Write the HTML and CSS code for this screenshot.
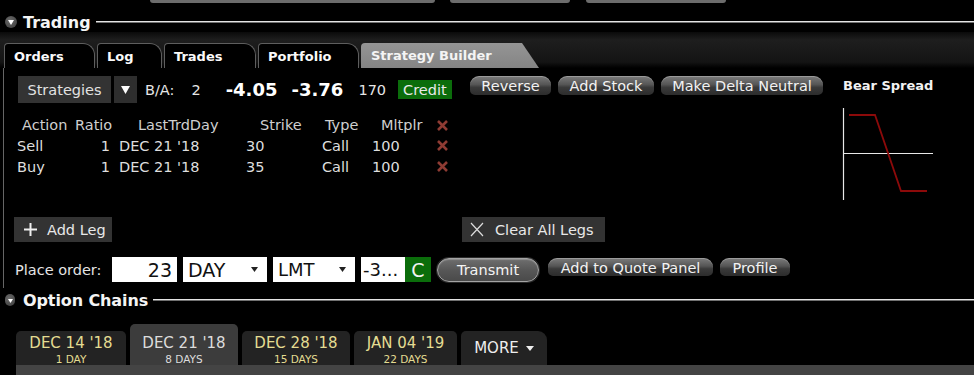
FILE: index.html
```html
<!DOCTYPE html>
<html lang="en">
<head>
<meta charset="utf-8">
<title>Trading</title>
<link rel="stylesheet" href="styles.css">
</head>
<body>
<div class="topstrip"><span class="tb tb1"></span><span class="tb tb2"></span><span class="tb tb3"></span></div>

<div class="section-head trading-head">
  <span class="disc"><svg width="6" height="5" viewBox="0 0 6 5"><path d="M0 0H6L3 5Z" fill="#fff"/></svg></span>
  <span class="sh-title">Trading</span>
  <span class="sh-line"></span>
</div>

<div class="trading">
  <div class="tabs">
    <div class="tab t-orders">Orders</div>
    <div class="tab t-log">Log</div>
    <div class="tab t-trades">Trades</div>
    <div class="tab t-portfolio">Portfolio</div>
    <div class="tab t-sb active">Strategy Builder</div>
  </div>
  <div class="pbody">
    <div class="upper">
      <div class="left">
        <div class="strat-row">
          <span class="strat-btn">Strategies</span>
          <span class="strat-dd"><svg width="9" height="8" viewBox="0 0 9 8"><path d="M0 0H9L4.5 8Z" fill="#fff"/></svg></span>
          <span class="ba">B/A:</span>
          <span class="ba-n">2</span>
          <span class="px px-bid">-4.05</span>
          <span class="px px-ask">-3.76</span>
          <span class="vol">170</span>
          <span class="credit">Credit</span>
        </div>
        <div class="legs">
          <div class="lrow lhead">
            <span>Action</span><span>Ratio</span><span>LastTrdDay</span><span>Strike</span><span>Type</span><span>Mltplr</span>
            <span class="xc"><svg width="11" height="11" viewBox="0 0 11 11"><path d="M1 1L10 10M10 1L1 10" stroke="#8e3b33" stroke-width="2.6"/></svg></span>
          </div>
          <div class="lrow">
            <span>Sell</span><span>1</span><span>DEC 21 '18</span><span>30</span><span>Call</span><span>100</span>
            <span class="xc"><svg width="11" height="11" viewBox="0 0 11 11"><path d="M1 1L10 10M10 1L1 10" stroke="#8e3b33" stroke-width="2.6"/></svg></span>
          </div>
          <div class="lrow">
            <span>Buy</span><span>1</span><span>DEC 21 '18</span><span>35</span><span>Call</span><span>100</span>
            <span class="xc"><svg width="11" height="11" viewBox="0 0 11 11"><path d="M1 1L10 10M10 1L1 10" stroke="#8e3b33" stroke-width="2.6"/></svg></span>
          </div>
        </div>
      </div>
      <div class="actions">
        <span class="gbtn b-rev">Reverse</span>
        <span class="gbtn b-stock">Add Stock</span>
        <span class="gbtn b-delta">Make Delta Neutral</span>
      </div>
      <div class="diagram">
        <div class="dg-title">Bear Spread</div>
        <svg class="dg-chart" width="92" height="92" viewBox="0 0 92 92">
          <path d="M1.5 0V92" stroke="#e8e8e8" stroke-width="1.2"/>
          <path d="M1 45.5H91" stroke="#e8e8e8" stroke-width="1.2"/>
          <path d="M7 7H33L59 83H85" fill="none" stroke="#8c0a0a" stroke-width="1.8"/>
        </svg>
      </div>
    </div>
    <div class="leg-actions">
      <span class="dbtn add-leg"><svg class="plus" width="13" height="13" viewBox="0 0 13 13"><path d="M6.5 0V13M0 6.5H13" stroke="#eee" stroke-width="2"/></svg>Add Leg</span>
      <span class="dbtn clear-legs"><svg class="clr" width="14" height="15" viewBox="0 0 14 15"><path d="M1 1L13 14M13 1L1 14" stroke="#ddd" stroke-width="1.2"/></svg>Clear All Legs</span>
    </div>
    <div class="order-row">
      <span class="po-label">Place order:</span>
      <span class="fld f-qty">23</span>
      <span class="fld f-sel f-tif">DAY<svg class="caret" width="7" height="5" viewBox="0 0 7 5"><path d="M0 0H7L3.5 5Z" fill="#222"/></svg></span>
      <span class="fld f-sel f-type">LMT<svg class="caret" width="7" height="5" viewBox="0 0 7 5"><path d="M0 0H7L3.5 5Z" fill="#222"/></svg></span>
      <span class="fld f-price">-3...</span><span class="f-c">C</span>
      <span class="transmit">Transmit</span>
      <span class="gbtn b-quote">Add to Quote Panel</span>
      <span class="gbtn b-profile">Profile</span>
    </div>
  </div>
</div>

<div class="section-head chains-head">
  <span class="disc disc-sm"><svg width="5" height="4" viewBox="0 0 5 4"><path d="M0 0H5L2.5 4Z" fill="#fff"/></svg></span>
  <span class="sh-title ch-title">Option Chains</span>
  <span class="sh-line"></span>
</div>

<div class="expiries">
  <div class="etabs">
    <div class="etab e1"><span class="e-date">DEC 14 '18</span><span class="e-days">1 DAY</span></div>
    <div class="etab e2 e-active"><span class="e-date">DEC 21 '18</span><span class="e-days">8 DAYS</span></div>
    <div class="etab e3"><span class="e-date">DEC 28 '18</span><span class="e-days">15 DAYS</span></div>
    <div class="etab e4"><span class="e-date">JAN 04 '19</span><span class="e-days">22 DAYS</span></div>
    <div class="etab e-more">MORE<svg class="more-caret" width="8" height="5" viewBox="0 0 8 5"><path d="M0 0H8L4 5Z" fill="#eee"/></svg></div>
  </div>
  <div class="estrip"></div>
</div>
</body>
</html>
```

FILE: styles.css
```css
* { box-sizing: border-box; }

body {
  margin: 0;
  width: 974px;
  height: 375px;
  overflow: hidden;
  background: #000;
  color: #e6e6e6;
  font-family: "DejaVu Sans", "Liberation Sans", sans-serif;
  font-size: 14.5px;
}

/* top partial toolbar */
.topstrip { height: 4px; display: flex; }
.tb { height: 3px; background: #6c6c6c; border-radius: 0 0 5px 5px; }
.tb1 { margin-left: 150px; width: 285px; }
.tb2 { margin-left: 15px; width: 120px; }
.tb3 { margin-left: 16px; width: 140px; }

/* section headers */
.section-head { display: flex; align-items: center; }
.trading-head { margin-top: 8px; height: 20px; }
.disc {
  width: 12px; height: 12px; margin-left: 5px;
  border-radius: 50%;
  background: radial-gradient(circle at 40% 35%, #6a6a6a, #3a3a3a);
  display: flex; align-items: center; justify-content: center;
}
.disc svg { margin-top: 1px; }
.disc-sm { width: 10px; height: 12px; border-radius: 5px; }
.sh-title { font-weight: bold; font-size: 16px; color: #f4f4f4; margin-left: 6px; white-space: nowrap; }
.ch-title { font-size: 16px; margin-left: 8px; letter-spacing: -0.1px; }
.sh-line { flex: 1; height: 2px; margin-left: 5px; border-top: 1px solid #e4e4e4; border-bottom: 1px solid #707070; }

/* trading panel */
.trading {
  height: 256px;
  padding-top: 11px;
  background: linear-gradient(#0a0a0a 0, #1e1e1e 8px, #141414 30px, #000 36px);
}
.tabs { display: flex; gap: 2px; padding-left: 4px; height: 25px; }
.tab {
  height: 25px;
  padding-left: 9px;
  font-weight: bold; font-size: 13px; color: #fafafa;
  display: flex; align-items: center;
  background: #000;
  border: 1px solid #5e5e5e; border-bottom: none;
  border-radius: 4px 12px 0 0;
}
.t-orders { width: 91px; }
.t-log { width: 65px; }
.t-trades { width: 92px; }
.t-portfolio { width: 101px; }
.t-sb { width: 178px; }
.tab.active {
  background: linear-gradient(#959595, #848484);
  border: none;
  color: #f4f4f4;
  padding-left: 10px;
  border-radius: 4px 0 0 0;
  clip-path: polygon(0 0, calc(100% - 17px) 0, 100% 100%, 0 100%);
}

.pbody {
  height: 220px;
  margin-left: 3px;
  border-left: 1px solid #666;
  padding: 8px 0 0 10px;
}
.upper { display: flex; align-items: flex-start; }
.left { width: 456px; }

.strat-row { display: flex; align-items: center; height: 27px; margin-left: 4px; white-space: nowrap; }
.strat-btn {
  width: 93px; height: 27px; background: #333; color: #e2e2e2;
  display: flex; align-items: center; justify-content: center;
}
.strat-dd {
  width: 23px; height: 27px; margin-left: 3px; background: #2e2e2e;
  display: flex; align-items: center; justify-content: center;
}
.ba { margin-left: 8px; }
.ba-n { margin-left: 17px; }
.px { font-weight: bold; font-size: 18px; color: #fff; }
.px-bid { margin-left: 25px; }
.px-ask { margin-left: 14px; }
.vol { margin-left: 15px; }
.credit {
  margin-left: 12px; height: 19px; padding: 0 5px;
  background: #0b6d0b; color: #eaeaea;
  display: flex; align-items: center;
}

.legs { margin-top: 12px; margin-left: 3px; }
.lrow {
  display: grid;
  grid-template-columns: 56px 42px 128px 78px 50px 64px 20px;
  height: 21px; align-items: center;
  color: #dedede; white-space: nowrap;
}
.lrow.lhead { height: 20px; color: #cfcfcf; }
.lrow span:nth-child(2) { text-align: right; padding-right: 5px; }
.lrow span:nth-child(3) { padding-left: 4px; }
.lrow span:nth-child(4) { padding-left: 3px; }
.lrow span:nth-child(5) { padding-left: 1px; }
.lrow span:nth-child(6) { padding-left: 1px; }
.lhead span:nth-child(1) { padding-left: 5px; }
.lhead span:nth-child(2) { text-align: left; padding-left: 2px; padding-right: 0; }
.lhead span:nth-child(3) { padding-left: 23px; }
.lhead span:nth-child(4) { padding-left: 17px; }
.lhead span:nth-child(5) { padding-left: 4px; }
.lhead span:nth-child(6) { padding-left: 10px; }
.xc { display: flex; align-items: center; padding-left: 2px; }

/* gray gradient buttons */
.actions { display: flex; gap: 7px; }
.gbtn {
  height: 19px;
  border-radius: 9px 9px 5px 5px;
  background: linear-gradient(#7c7c7c, #555 45%, #3a3a3a 60%, #2c2c2c);
  box-shadow: inset 0 1px 0 rgba(255,255,255,0.25);
  color: #f2f2f2;
  display: flex; align-items: center; justify-content: center;
  white-space: nowrap;
  padding-top: 1px;
}
.b-rev { width: 81px; }
.b-stock { width: 96px; }
.b-delta { width: 162px; }

.diagram { margin-left: 20px; }
.dg-title { height: 20px; line-height: 20px; font-weight: bold; font-size: 13px; color: #f2f2f2; white-space: nowrap; }
.dg-chart { display: block; margin-top: 12px; margin-left: -1px; }

/* leg actions */
.leg-actions { display: flex; margin-top: 17px; }
.dbtn {
  height: 25px; background: #333; color: #e8e8e8;
  display: flex; align-items: center; white-space: nowrap;
}
.add-leg { width: 98px; padding-left: 10px; }
.plus { margin-right: 10px; }
.clear-legs { width: 143px; margin-left: 350px; padding-left: 8px; }
.clr { margin-right: 11px; }

/* order row */
.order-row { display: flex; align-items: center; margin-top: 15px; height: 25px; white-space: nowrap; }
.po-label { width: 98px; padding-left: 1px; color: #e4e4e4; }
.fld {
  height: 25px; background: #fff; color: #111;
  font-size: 19px;
  display: flex; align-items: center;
}
.f-qty { width: 65px; justify-content: flex-end; padding-right: 5px; }
.f-tif { width: 84px; margin-left: 6px; padding-left: 5px; }
.f-type { width: 82px; margin-left: 6px; padding-left: 5px; font-size: 18px; }
.caret { margin-left: auto; margin-right: 9px; }
.f-price { width: 44px; margin-left: 6px; padding-left: 2px; font-size: 18px; }
.f-c {
  width: 26px; height: 25px; background: #0b6d0b; color: #f2f2f2;
  font-size: 19px; display: flex; align-items: center; justify-content: center;
}
.transmit {
  width: 102px; height: 24px; margin-left: 6px;
  border-radius: 12px;
  border: 1px solid #a4a4a4;
  background: linear-gradient(#6e6e6e, #575757 50%, #4a4a4a);
  box-shadow: 0 0 0 1px #2a2a2a, inset 0 1px 1px rgba(255,255,255,0.25);
  color: #f4f4f4;
  display: flex; align-items: center; justify-content: center;
}
.b-quote { width: 165px; height: 18px; margin-left: 9px; align-self: flex-start; margin-top: 1px; }
.b-profile { width: 70px; height: 18px; margin-left: 7px; align-self: flex-start; margin-top: 1px; }

/* option chains */
.chains-head { margin-top: 2px; height: 20px; }

.expiries { margin-top: 14px; }
.etabs { display: flex; align-items: flex-end; gap: 4px; padding-left: 16px; height: 41px; }
.etab {
  height: 34px;
  padding-top: 4px;
  background: #232323;
  border-radius: 5px 5px 0 0;
  display: flex; flex-direction: column; align-items: center;
  color: #e4dc92;
  white-space: nowrap;
}
.e1 { width: 110px; }
.e2 { width: 108px; }
.e3 { width: 108px; }
.e4 { width: 103px; }
.e-active { height: 41px; padding-top: 11px; background: #3c3c3c; color: #dcdcdc; }
.e-date { font-size: 15px; line-height: 16px; }
.e-days { font-size: 10.5px; line-height: 11px; margin-top: 3px; }
.e-more {
  width: 86px; padding-top: 0;
  flex-direction: row; justify-content: center; align-items: center;
  border-radius: 5px 9px 0 0;
  font-size: 15px; color: #eee;
}
.more-caret { margin-left: 7px; }
.estrip { height: 10px; margin-left: 16px; background: #444; }
```
